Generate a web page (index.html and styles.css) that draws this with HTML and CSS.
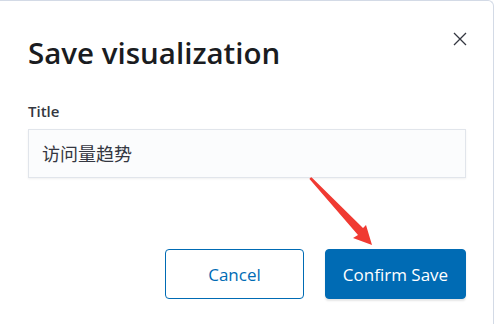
FILE: index.html
```html
<!DOCTYPE html>
<html lang="en">
<head>
  <meta charset="UTF-8" />
  <title>Save visualization</title>
  <link rel="stylesheet" href="styles.css">
</head>
<body>

  <div class="modal">
    <button class="close" aria-label="Close">
      <svg width="14" height="14" viewBox="0 0 14 14">
        <path d="M1 1 L13 13 M13 1 L1 13" stroke="#343741" stroke-width="1.3" fill="none"/>
      </svg>
    </button>

    <h1 class="modal-title">Save visualization</h1>

    <div class="field">
      <label class="field-label">Title</label>
      <div class="field-input">访问量趋势</div>
    </div>

    <div class="footer">
      <button class="btn btn-empty">Cancel</button>
      <button class="btn btn-fill">Confirm Save</button>
    </div>

    <!-- annotation arrow -->
    <svg class="arrow" width="80" height="80" viewBox="0 0 80 80">
      <polygon points="0,0 1.5,-0.8 53,50 56,47 62,67 43,60 48,57 -0.5,1" fill="#f03a32"/>
    </svg>
  </div>

</body>
</html>
```

FILE: styles.css
```css
body {
  margin: 0;
  background: #fff;
  font-family: "Open Sans", "Noto Sans CJK SC", sans-serif;
  color: #1a1c21;
}

.modal {
  position: relative;
  width: 494px;
  height: 340px;
  box-sizing: border-box;
  border-top: 1px solid #d3dae6;
  border-right: 1px solid #d3dae6;
  border-top-right-radius: 6px;
  padding: 34px 0 0 28px;
}

.close {
  position: absolute;
  top: 31px;
  right: 26px;
  border: none;
  background: none;
  padding: 0;
  width: 14px;
  height: 14px;
}

.close svg {
  display: block;
}

.modal-title {
  margin: 0;
  font-size: 29.5px;
  font-weight: 600;
  line-height: 36px;
}

.field {
  margin-top: 30px;
  width: 438px;
}

.field-label {
  display: block;
  font-size: 15px;
  font-weight: 600;
  line-height: 20px;
  color: #343741;
}

.field-input {
  margin-top: 8px;
  height: 49px;
  box-sizing: border-box;
  padding: 0 13px;
  background: #fbfcfd;
  border: 1px solid #e1e5eb;
  box-shadow: 0 1px 2px rgba(0, 0, 0, 0.06);
  font-family: "Noto Sans CJK SC", sans-serif;
  font-size: 18px;
  line-height: 47px;
  color: #343741;
}

.footer {
  display: flex;
  justify-content: flex-end;
  gap: 21px;
  width: 438px;
  margin-top: 71px;
}

.btn {
  height: 50px;
  border-radius: 4px;
  font-family: "Open Sans", sans-serif;
  font-size: 17px;
  cursor: pointer;
}

.btn-empty {
  width: 139px;
  background: #fff;
  color: #006bb4;
  border: 1px solid #006bb4;
}

.btn-fill {
  width: 141px;
  background: #006bb4;
  color: #fff;
  border: 1px solid #006bb4;
  box-shadow: 0 2px 2px rgba(0, 0, 0, 0.1);
}

.arrow {
  position: absolute;
  left: 310px;
  top: 177px;
  overflow: visible;
}
```
